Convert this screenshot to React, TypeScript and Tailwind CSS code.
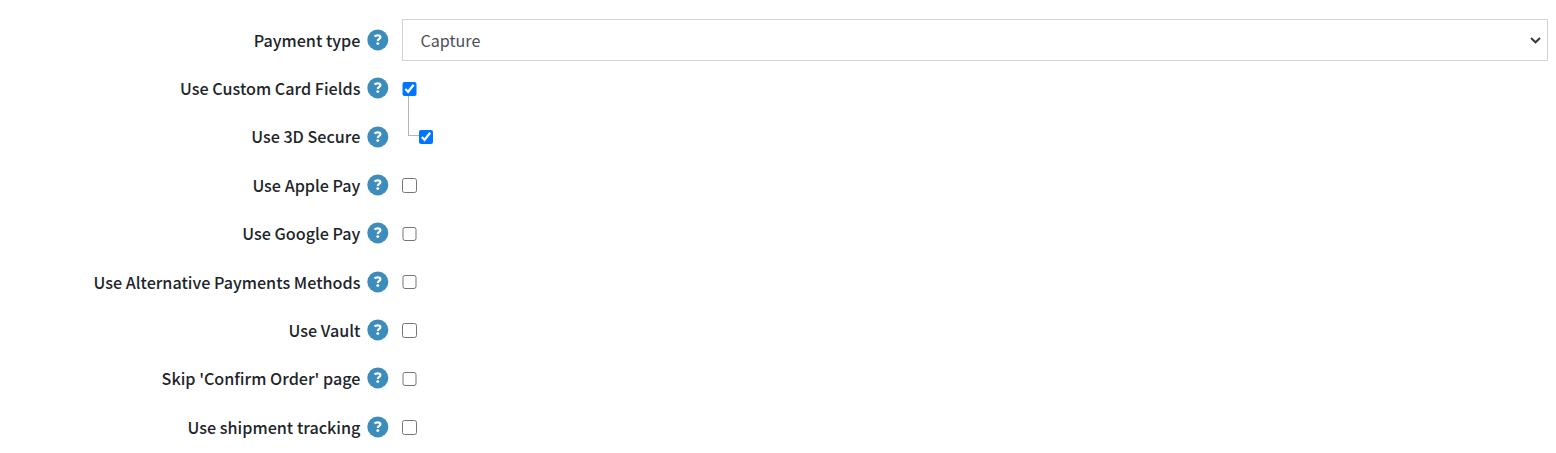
import { useState } from "react";

type Field = { label: string; checked: boolean; nested?: boolean };

const fields: Field[] = [
  { label: "Use Custom Card Fields", checked: true },
  { label: "Use 3D Secure", checked: true, nested: true },
  { label: "Use Apple Pay", checked: false },
  { label: "Use Google Pay", checked: false },
  { label: "Use Alternative Payments Methods", checked: false },
  { label: "Use Vault", checked: false },
  { label: "Skip 'Confirm Order' page", checked: false },
  { label: "Use shipment tracking", checked: false },
];

function HelpIcon() {
  return (
    <svg viewBox="0 0 22 22" className="mb-[0.6px] block size-[22px] shrink-0" aria-hidden="true">
      <g transform="translate(.3 .4)">
        <circle cx="10.5" cy="10.5" r="10.5" fill="#3c8dbc" />
        <path d="M7.2 7.2Q8.3 6 10.3 6Q13.1 6 13.1 7.9Q13.1 9 11.8 9.6Q10.5 10.2 10.5 11.6" fill="none" stroke="#fff" strokeWidth="2.2" />
        <circle cx="10.5" cy="14.2" r="1.45" fill="#fff" />
      </g>
    </svg>
  );
}

function FieldLabel({ label }: { label: string }) {
  return (
    <div className="flex w-[389.2px] shrink-0 items-center justify-end gap-[6.8px]">
      <span className="pb-[0.95px] text-[16.15px] leading-6 font-medium whitespace-nowrap text-[#212529]">{label}</span>
      <HelpIcon />
    </div>
  );
}

function CheckField({ label, checked, nested }: Field) {
  const [on, setOn] = useState(checked);
  return (
    <div className="flex h-[48.37px] items-center">
      <FieldLabel label={label} />
      <div className={nested ? "relative pt-[0.4px] pl-[29.6px]" : "relative pt-[0.5px] pl-[13.2px]"}>
        {nested && (
          <span className="absolute bottom-[8px] left-[18.8px] h-[40px] w-[11px] border-b border-l border-[#b5b5b5]" />
        )}
        <input
          type="checkbox"
          aria-label={label}
          checked={on}
          onChange={() => setOn(!on)}
          className="block size-[14.4px]"
        />
      </div>
    </div>
  );
}

export default function App() {
  return (
    <form className="h-[453px] bg-white pt-[16px] pr-2 font-['Noto_Sans_CJK_SC','Noto_Sans',sans-serif] text-[16px]">
      <div className="flex h-[48.37px] items-center">
        <FieldLabel label="Payment type" />
        <div className="flex-1 pl-[12.8px]">
          <div className="flex h-[42px] items-center justify-between border border-[#ced4da] bg-white pr-[6px] pl-[17.5px]">
            <span className="pb-[0.4px] text-[16.1px] leading-6 text-[#495057]">Capture</span>
            <svg viewBox="0 0 11 7" className="mt-px h-[7px] w-[11px]" fill="none" stroke="#343a40" strokeWidth="2">
              <path d="M1 1l4.5 4.3L10 1" />
            </svg>
          </div>
        </div>
      </div>
      {fields.map((field) => (
        <CheckField key={field.label} {...field} />
      ))}
    </form>
  );
}
